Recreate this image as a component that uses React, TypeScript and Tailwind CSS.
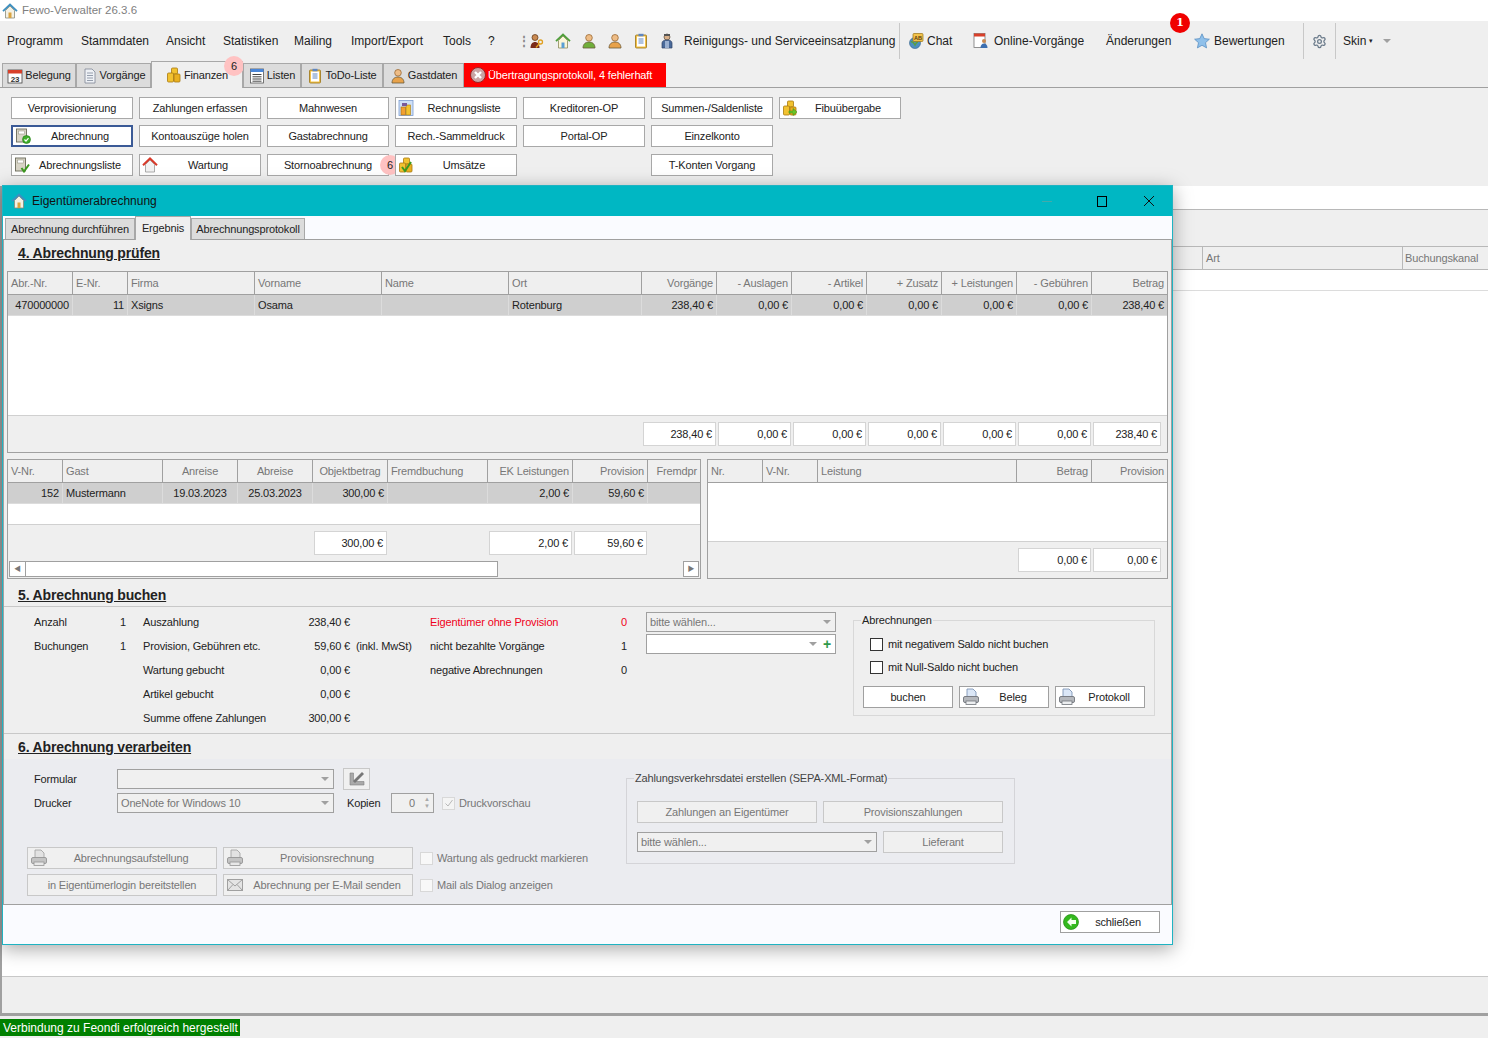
import type { ReactNode } from "react";
import { Settings } from "lucide-react";

type IconProps = { className?: string };

const Person = ({ body, className = "w-4 h-4" }: IconProps & { body: string }) => (
  <svg viewBox="0 0 16 16" className={className}>
    <circle cx="8" cy="4.8" r="3.3" fill="#eebc85" stroke="#9a6a35" strokeWidth="0.8" />
    <path d="M2 15c0-4 2.6-6 6-6s6 2 6 6z" fill={body} stroke="#6b5a3a" strokeWidth="0.8" />
  </svg>
);

const House = ({ className = "w-4 h-4" }: IconProps) => (
  <svg viewBox="0 0 16 16" className={className}>
    <path d="M3.5 7.5V15h9V7.5L8 3z" fill="#f4f1e4" stroke="#8a8a7a" strokeWidth="0.8" />
    <path d="M1 8.2 8 1.5l7 6.7" fill="none" stroke="#3d8fc0" strokeWidth="1.8" />
    <rect x="6.5" y="9.5" width="3" height="5.5" fill="#d9a441" />
  </svg>
);

const HouseGreen = () => (
  <svg viewBox="0 0 16 16" className="w-4 h-4">
    <path d="M3.5 7.5V15h9V7.5L8 3z" fill="#fbf6d8" stroke="#8a8a5a" strokeWidth="0.8" />
    <path d="M1 8.2 8 1.5l7 6.7" fill="none" stroke="#4f9e3a" strokeWidth="1.8" />
    <rect x="6.5" y="9.5" width="3" height="5.5" fill="#5a9fd4" />
  </svg>
);

const HouseRed = () => (
  <svg viewBox="0 0 16 16" className="w-4 h-4">
    <path d="M3.5 7.5V15h9V7.5L8 3z" fill="#f2f2f2" stroke="#999" strokeWidth="0.8" />
    <path d="M1 8.2 8 1.5l7 6.7" fill="none" stroke="#d83a2a" strokeWidth="2" />
  </svg>
);

const Coins = ({ check, arrow }: { check?: boolean; arrow?: boolean }) => (
  <svg viewBox="0 0 16 16" className="w-4 h-4">
    <rect x="5.5" y="1" width="6" height="6" rx="1" fill="#f2c230" stroke="#a87a10" strokeWidth="0.8" />
    <rect x="1.5" y="6" width="6" height="9" rx="1" fill="#f2c230" stroke="#a87a10" strokeWidth="0.8" />
    <rect x="8" y="7" width="6" height="8" rx="1" fill="#e9b020" stroke="#a87a10" strokeWidth="0.8" />
    {check && <path d="M4 10l3 4 6-9" fill="none" stroke="#3a9a20" strokeWidth="2" />}
    {arrow && <path d="M7 11h4V8.5l4 3.5-4 3.5V13H7z" fill="#6ac52a" stroke="#3a8a10" strokeWidth="0.5" />}
  </svg>
);

const CoinsDoc = () => (
  <svg viewBox="0 0 16 16" className="w-4 h-4">
    <rect x="1" y="0.5" width="14" height="15" fill="#cfe0f7" stroke="#7a9cd0" strokeWidth="0.8" />
    <rect x="3" y="7" width="4.5" height="8" fill="#f2a030" stroke="#a06a10" strokeWidth="0.6" />
    <rect x="8" y="5" width="4.5" height="10" fill="#f2c230" stroke="#a87a10" strokeWidth="0.6" />
    <rect x="4" y="3" width="5" height="3" fill="#7a5a9a" />
  </svg>
);

const ReportCheck = ({ round }: { round?: boolean }) => (
  <svg viewBox="0 0 16 16" className="w-4 h-4">
    <rect x="1.5" y="1" width="10" height="13" fill="#d8d4c6" stroke="#6a6a5a" strokeWidth="0.9" />
    <rect x="3.5" y="3" width="6" height="3" fill="#fff" stroke="#8a8a7a" strokeWidth="0.5" />
    {round && <circle cx="11.5" cy="11.5" r="4" fill="#3fae2a" stroke="#1f7a10" strokeWidth="0.6" />}
    <path d={round ? "M9.5 11.5l1.5 1.7 2.5-3" : "M7.5 11l2.5 3.5 5-7"} fill="none" stroke={round ? "#fff" : "#3c9a20"} strokeWidth={round ? 1.2 : 2} />
  </svg>
);

const PrinterIcon = () => (
  <svg viewBox="0 0 18 18" className="w-[18px] h-[18px]">
    <path d="M5 1h6l3 3v6H5z" fill="#dbe7f7" stroke="#7f95b5" strokeWidth="0.9" />
    <rect x="1.5" y="8.5" width="15" height="6" rx="1.5" fill="#b5b8bd" stroke="#70747a" strokeWidth="0.9" />
    <rect x="4" y="13" width="10" height="3.5" fill="#eceef0" stroke="#70747a" strokeWidth="0.8" />
  </svg>
);

const PrinterOff = () => (
  <svg viewBox="0 0 18 18" className="w-[18px] h-[18px]">
    <path d="M5 1h6l3 3v6H5z" fill="#e2e2e2" stroke="#a5a5a5" strokeWidth="0.9" />
    <rect x="1.5" y="8.5" width="15" height="6" rx="1.5" fill="#c4c4c4" stroke="#959595" strokeWidth="0.9" />
    <rect x="4" y="13" width="10" height="3.5" fill="#e8e8e8" stroke="#959595" strokeWidth="0.8" />
  </svg>
);

const MailOff = () => (
  <svg viewBox="0 0 18 18" className="w-[18px] h-[18px]">
    <rect x="1.5" y="3.5" width="15" height="11" fill="#e4e4e4" stroke="#a0a0a0" />
    <path d="M1.5 3.5 9 10l7.5-6.5M1.5 14.5 7 8.5M16.5 14.5 11 8.5" fill="none" stroke="#a0a0a0" />
  </svg>
);

const RulerOff = () => (
  <svg viewBox="0 0 18 18" className="w-[18px] h-[18px]">
    <path d="M2 3v12h14v-3.5H5.5V3z" fill="#a9a9a9" stroke="#808080" strokeWidth="0.6" />
    <path d="M5 11 14 2l2 2-9 9z" fill="#777" />
  </svg>
);

const BackIcon = () => (
  <svg viewBox="0 0 16 16" className="w-4 h-4">
    <circle cx="8" cy="8" r="7.5" fill="#34b81e" stroke="#1f8a10" strokeWidth="0.7" />
    <path d="M8.5 3.5 4 8l4.5 4.500V10H13V6H8.500z" fill="#f4fff0" />
  </svg>
);

const Caret = () => (
  <svg viewBox="0 0 8 4" className="w-2 h-1 shrink-0">
    <path d="M0 0h8L4 4z" fill="#a0a0a0" />
  </svg>
);

const Calendar = () => (
  <svg viewBox="0 0 16 16" className="w-4 h-4">
    <rect x="1" y="2" width="14" height="13" fill="#fff" stroke="#444" strokeWidth="0.8" />
    <rect x="1" y="2" width="14" height="3.5" fill="#d8402a" />
    <text x="8" y="13.5" textAnchor="middle" fontSize="8" fontWeight="700" fill="#333">23</text>
  </svg>
);

const DocIcon = () => (
  <svg viewBox="0 0 16 16" className="w-4 h-4">
    <path d="M3 1h7l3 3v11H3z" fill="#eef1f5" stroke="#7d8794" strokeWidth="0.8" />
    <path d="M5 5h6M5 7.5h6M5 10h6M5 12.5h6" stroke="#8a94a5" strokeWidth="0.9" />
  </svg>
);

const ListIcon = () => (
  <svg viewBox="0 0 16 16" className="w-4 h-4">
    <rect x="1.5" y="1" width="13" height="14" fill="#fff" stroke="#555" strokeWidth="0.8" />
    <rect x="1.5" y="1" width="13" height="3" fill="#4a86d8" />
    <path d="M3.5 6.5h9M3.5 8.8h9M3.5 11h9M3.5 13.2h9" stroke="#444" />
  </svg>
);

const Clipboard = () => (
  <svg viewBox="0 0 16 16" className="w-4 h-4">
    <rect x="2.5" y="2" width="11" height="13" rx="1" fill="#f2c24a" stroke="#9a7415" strokeWidth="0.8" />
    <rect x="4" y="3.5" width="8" height="10" fill="#fff" />
    <rect x="5.5" y="0.8" width="5" height="2.5" fill="#5f86c0" />
    <path d="M5.5 6h5M5.5 8h5M5.5 10h5" stroke="#5f86c0" />
  </svg>
);

const ErrorIcon = () => (
  <svg viewBox="0 0 16 16" className="w-4 h-4 shrink-0">
    <circle cx="8" cy="8" r="7.5" fill="#c9a3a3" stroke="#a02020" />
    <path d="M5 5l6 6M11 5l-6 6" stroke="#fff" strokeWidth="2.4" />
  </svg>
);

const Keys = () => (
  <svg viewBox="0 0 16 16" className="w-4 h-4">
    <circle cx="6" cy="4.5" r="3" fill="#c98a52" stroke="#5a2f10" strokeWidth="0.7" />
    <path d="M1.5 15c0-4 2-6 4.5-6s4.500 2 4.500 6z" fill="#7a2a1a" />
    <circle cx="11.5" cy="9" r="2" fill="none" stroke="#e0a020" strokeWidth="1.3" />
    <path d="M10.5 10.5 7 14.5" stroke="#e0a020" strokeWidth="1.3" />
  </svg>
);

const Cleaner = () => (
  <svg viewBox="0 0 16 16" className="w-4 h-4">
    <circle cx="8" cy="4" r="3" fill="#d8b08a" stroke="#5a4a3a" strokeWidth="0.7" />
    <rect x="5" y="1" width="6" height="2" fill="#555" />
    <path d="M3 15V10c0-2 2-3 5-3s5 1 5 3v5z" fill="#4a6a9a" stroke="#2f4468" strokeWidth="0.7" />
    <rect x="6" y="8" width="4" height="7" fill="#9ab0d0" />
  </svg>
);

const ChatIcon = () => (
  <svg viewBox="0 0 16 16" className="w-4 h-4">
    <circle cx="7" cy="10" r="5.5" fill="#4f8fc0" stroke="#2f5f8a" strokeWidth="0.6" />
    <path d="M3 9c2-1 3 1 4 3 1-2 2-3 3-3" stroke="#5aa040" strokeWidth="1.5" fill="none" />
    <rect x="5" y="0.5" width="10" height="8" rx="1" fill="#f2c24a" stroke="#9a7415" strokeWidth="0.7" />
    <text x="10" y="7" textAnchor="middle" fontSize="5.5" fontWeight="700" fill="#5a3a10">AB</text>
  </svg>
);

const OnlineIcon = () => (
  <svg viewBox="0 0 16 16" className="w-4 h-4">
    <rect x="1" y="0.5" width="11" height="14" fill="#fff" stroke="#777" strokeWidth="0.8" />
    <rect x="1" y="0.5" width="11" height="3" fill="#d8402a" />
    <circle cx="11" cy="8" r="2" fill="#c98a52" />
    <path d="M7.5 15c0-3 1.5-4.500 3.500-4.500s3.500 1.500 3.500 4.500z" fill="#3d6fb0" />
  </svg>
);

const StarIcon = () => (
  <svg viewBox="0 0 16 16" className="w-4 h-4">
    <path d="M8 .8l2.200 4.800 5.200.6-3.900 3.500 1.100 5.200L8 12.300l-4.600 2.600 1.100-5.200L.6 6.200l5.200-.6z" fill="#8fc0ea" stroke="#4f86bd" strokeWidth="0.7" />
  </svg>
);

const modules: { label: string; icon?: ReactNode; active?: boolean; badge?: boolean }[] = [
  { label: "Verprovisionierung" },
  { label: "Zahlungen erfassen" },
  { label: "Mahnwesen" },
  { label: "Rechnungsliste", icon: <CoinsDoc /> },
  { label: "Kreditoren-OP" },
  { label: "Summen-/Saldenliste" },
  { label: "Fibuübergabe", icon: <Coins arrow /> },
  { label: "Abrechnung", icon: <ReportCheck round />, active: true },
  { label: "Kontoauszüge holen" },
  { label: "Gastabrechnung" },
  { label: "Rech.-Sammeldruck" },
  { label: "Portal-OP" },
  { label: "Einzelkonto" },
  { label: "" },
  { label: "Abrechnungsliste", icon: <ReportCheck /> },
  { label: "Wartung", icon: <HouseRed /> },
  { label: "Stornoabrechnung", badge: true },
  { label: "Umsätze", icon: <Coins check /> },
  { label: "" },
  { label: "T-Konten Vorgang" },
];

const mainTabs: { label: string; w: string; icon: ReactNode; active?: boolean }[] = [
  { label: "Belegung", w: "w-[74px]", icon: <Calendar /> },
  { label: "Vorgänge", w: "w-[75px]", icon: <DocIcon /> },
  { label: "Finanzen", w: "w-[92px]", icon: <Coins />, active: true },
  { label: "Listen", w: "w-[58px]", icon: <ListIcon /> },
  { label: "ToDo-Liste", w: "w-[82px]", icon: <Clipboard /> },
  { label: "Gastdaten", w: "w-[81px]", icon: <Person body="#e8a24a" /> },
];

const menu = [
  { label: "Programm", w: "w-[74px]" },
  { label: "Stammdaten", w: "w-[85px]" },
  { label: "Ansicht", w: "w-[57px]" },
  { label: "Statistiken", w: "w-[71px]" },
  { label: "Mailing", w: "w-[57px]" },
  { label: "Import/Export", w: "w-[92px]" },
  { label: "Tools", w: "w-[45px]" },
  { label: "?", w: "w-[30px]" },
];

const topCols = "grid grid-cols-[65px_55px_127px_127px_127px_133px_75px_75px_75px_75px_75px_75px_75px]";
const topHead: [string, boolean][] = [
  ["Abr.-Nr.", false], ["E-Nr.", false], ["Firma", false], ["Vorname", false], ["Name", false], ["Ort", false],
  ["Vorgänge", true], ["- Auslagen", true], ["- Artikel", true], ["+ Zusatz", true], ["+ Leistungen", true], ["- Gebühren", true], ["Betrag", true],
];
const topRow: [string, boolean][] = [
  ["470000000", true], ["11", true], ["Xsigns", false], ["Osama", false], ["", false], ["Rotenburg", false],
  ["238,40 €", true], ["0,00 €", true], ["0,00 €", true], ["0,00 €", true], ["0,00 €", true], ["0,00 €", true], ["238,40 €", true],
];

const leftCols = "grid grid-cols-[55px_100px_75px_75px_75px_100px_85px_75px_52px]";
const leftHead: [string, string][] = [
  ["V-Nr.", "text-left"], ["Gast", "text-left"], ["Anreise", "text-center"], ["Abreise", "text-center"], ["Objektbetrag", "text-center"],
  ["Fremdbuchung", "text-left"], ["EK Leistungen", "text-right"], ["Provision", "text-right"], ["Fremdpr", "text-right"],
];
const leftRow: [string, string][] = [
  ["152", "text-right"], ["Mustermann", "text-left"], ["19.03.2023", "text-center"], ["25.03.2023", "text-center"], ["300,00 €", "text-right"],
  ["", "text-left"], ["2,00 €", "text-right"], ["59,60 €", "text-right"], ["", "text-left"],
];

const rightCols = "grid grid-cols-[55px_55px_199px_75px_75px]";
const rightHead: [string, boolean][] = [["Nr.", false], ["V-Nr.", false], ["Leistung", false], ["Betrag", true], ["Provision", true]];

const HeadCell = ({ children, align }: { children: ReactNode; align: string }) => (
  <div className={`h-[22px] leading-[22px] px-[3px] border-r border-[#a0a0a0] last:border-r-0 text-[#777] overflow-hidden whitespace-nowrap ${align}`}>
    {children}
  </div>
);

const DataCell = ({ children, align }: { children: ReactNode; align: string }) => (
  <div className={`h-[20px] leading-[20px] px-[3px] border-r border-[#dcdcdc] last:border-r-0 text-[#222] overflow-hidden whitespace-nowrap ${align}`}>
    {children}
  </div>
);

const SumBox = ({ value, w = "w-[73px]" }: { value: string; w?: string }) => (
  <div className={`${w} h-[24px] leading-[22px] bg-white border border-[#d4d4d4] text-right pr-[3px] text-[#222]`}>{value}</div>
);

const Heading = ({ children, h }: { children: ReactNode; h: string }) => (
  <div className={`${h} pl-[14px] flex`}>
    <span className="text-[14px] leading-[18px] font-bold underline text-[#222]">{children}</span>
  </div>
);

const Combo = ({ text, w, plus, enabled }: { text?: string; w: string; plus?: boolean; enabled?: boolean }) => (
  <div className={`${w} h-[20px] shrink-0 border border-[#a0a0a0] flex items-center pl-[3px] pr-[4px] ${enabled ? "bg-white" : "bg-[#f0f0f0]"}`}>
    <span className="flex-1 text-[#777] whitespace-nowrap">{text}</span>
    <Caret />
    {plus && <span className="ml-[6px] text-[#2f9a4a] font-bold text-[14px] leading-none">+</span>}
  </div>
);

const Btn = ({ children, icon, w, off }: { children: ReactNode; icon?: ReactNode; w: string; off?: boolean }) => (
  <div className={`${w} h-[22px] shrink-0 border flex items-center pl-[2px] pr-[2px] ${off ? "bg-[#f0f0f0] border-[#c8c8c8] text-[#777]" : "bg-white border-[#a0a0a0] text-[#222]"}`}>
    {icon}
    <span className="flex-1 text-center whitespace-nowrap">{children}</span>
  </div>
);

const summary = [
  ["Anzahl", "1", "Auszahlung", "238,40 €", "", "Eigentümer ohne Provision", "0"],
  ["Buchungen", "1", "Provision, Gebühren etc.", "59,60 €", "(inkl. MwSt)", "nicht bezahlte Vorgänge", "1"],
  ["", "", "Wartung gebucht", "0,00 €", "", "negative Abrechnungen", "0"],
  ["", "", "Artikel gebucht", "0,00 €", "", "", ""],
  ["", "", "Summe offene Zahlungen", "300,00 €", "", "", ""],
];

export default function App() {
  return (
    <div className="relative w-[1488px] h-[1038px] overflow-hidden bg-[#efefef] text-[11px] tracking-[-0.15px] text-[#222] font-['Liberation_Sans','Noto_Sans_CJK_SC',sans-serif]">
      {/* app title */}
      <div className="h-[21px] bg-white flex items-center pl-[2px] gap-[4px] text-[11.5px] tracking-normal text-[#808080]">
        <House />
        <span>Fewo-Verwalter 26.3.6</span>
      </div>

      {/* menu bar */}
      <div className="h-[40px] pl-[7px] flex items-center text-[12px] tracking-normal">
        {menu.map((m) => (
          <span key={m.label} className={m.w}>{m.label}</span>
        ))}
        <span className="w-[6px] text-[#888] font-bold">⋮</span>
        <div className="flex">
          <span className="w-[26px] flex justify-center"><Keys /></span>
          <span className="w-[26px] flex justify-center"><HouseGreen /></span>
          <span className="w-[26px] flex justify-center"><Person body="#6fae3a" /></span>
          <span className="w-[26px] flex justify-center"><Person body="#e8a24a" /></span>
          <span className="w-[26px] flex justify-center"><Clipboard /></span>
          <span className="w-[26px] flex justify-center"><Cleaner /></span>
        </div>
        <span className="ml-[4px] w-[215px] whitespace-nowrap">Reinigungs- und Serviceeinsatzplanung</span>
        <span className="h-[36px] border-l border-[#c8c8c8]" />
        <span className="ml-[8px] w-[19px]"><ChatIcon /></span>
        <span className="w-[46px]">Chat</span>
        <span className="w-[21px]"><OnlineIcon /></span>
        <span className="w-[112px]">Online-Vorgänge</span>
        <span className="relative w-[88px]">
          Änderungen
          <span className="absolute left-[64px] top-[-19px] w-[20px] h-[20px] rounded-full bg-[#f00000] text-white text-center font-bold text-[11px] leading-[20px] font-['DejaVu_Serif',serif]">1</span>
        </span>
        <span className="w-[20px]"><StarIcon /></span>
        <span className="w-[89px]">Bewertungen</span>
        <span className="h-[36px] border-l border-[#c8c8c8]" />
        <span className="w-[31px] flex justify-center text-[#6a7a8a]"><Settings size={15} /></span>
        <span className="h-[36px] border-l border-[#c8c8c8]" />
        <span className="ml-[7px] w-[26px]">Skin</span>
        <span className="text-[7px] w-[14px]">▾</span>
        <Caret />
      </div>

      {/* main tabs */}
      <div className="h-[27px] pl-[2px] flex items-end border-b border-[#a0a0a0]">
        {mainTabs.map((t) => (
          <div
            key={t.label}
            className={`${t.w} relative flex items-center justify-center gap-[2px] border border-b-0 border-[#a8a8a8] whitespace-nowrap ${
              t.active ? "h-[27px] bg-[#efefef] border-b-0 -mb-px" : "h-[24px] bg-[#dcdcdc]"
            }`}
          >
            {t.icon}
            <span>{t.label}</span>
            {t.active && (
              <span className="absolute left-[72px] top-[-6px] w-[20px] h-[20px] rounded-full bg-[#ffc2c2] text-center leading-[20px] text-[#222]">6</span>
            )}
          </div>
        ))}
        <div className="w-[202px] h-[24px] bg-[#ff0000] text-white flex items-center gap-[2px] pl-[6px] whitespace-nowrap">
          <ErrorIcon />
          <span className="pt-px">Übertragungsprotokoll, 4 fehlerhaft</span>
        </div>
      </div>

      {/* module buttons */}
      <div className="h-[98px] pl-[11px] pt-[9px]">
        <div className="grid grid-cols-[122px_122px_122px_122px_122px_122px_122px] gap-x-[6px] gap-y-[6px] w-fit">
          {modules.map((m, i) =>
            m.label === "" ? (
              <div key={i} />
            ) : (
              <div
                key={i}
                className={`relative h-[22px] bg-white flex items-center px-[2px] whitespace-nowrap ${
                  m.active ? "border-2 border-[#3b5a96]" : "border border-[#a8a8a8]"
                } ${i >= 14 ? "mt-[1px]" : ""}`}
              >
                {m.icon}
                <span className="flex-1 text-center pt-px">{m.label}</span>
                {m.badge && (
                  <span className="absolute left-[112px] top-[0px] w-[20px] h-[20px] rounded-full bg-[#ffc2c2] text-center leading-[20px]">6</span>
                )}
              </div>
            ),
          )}
        </div>
      </div>

      {/* list behind the dialog */}
      <div className="border-l-2 border-[#a0a0a0] h-[827px] flex flex-col">
        <div className="h-[24px] bg-white border-b border-[#b8b8b8]" />
        <div className="h-[36px]" />
        <div className="h-[24px] flex justify-end border-y border-[#b8b8b8] text-[#777] bg-[#efefef]">
          <div className="w-[200px] pl-[3px] border-l border-[#b8b8b8] leading-[22px]">Art</div>
          <div className="w-[86px] pl-[2px] border-l border-[#b8b8b8] leading-[22px] whitespace-nowrap">Buchungskanal</div>
        </div>
        <div className="h-[21px] bg-white border-b border-[#dcdcdc]" />
        <div className="flex-1 bg-white border-b border-[#c8c8c8]" />
        <div className="h-[36px]" />
      </div>
      <div className="h-[3px] bg-[#a0a0a0]" />

      {/* status bar */}
      <div className="pt-[3px]">
        <div className="w-[240px] h-[17px] bg-[#008000] text-white text-[12px] tracking-normal leading-[18px] pl-[3px] whitespace-nowrap">
          Verbindung zu Feondi erfolgreich hergestellt
        </div>
      </div>

      {/* dialog window */}
      <div className="absolute left-[2px] top-[185px] w-[1171px] h-[760px] flex flex-col border border-[#1fb3c2] bg-[#fafbff] shadow-[0_4px_18px_rgba(0,0,0,0.35)]">
        <div className="h-[30px] shrink-0 bg-[#00b7c3] flex items-center pl-[8px] gap-[5px] text-[12px] tracking-normal text-[#111]">
          <House />
          <span className="flex-1">Eigentümerabrechnung</span>
          <span className="w-[46px] flex justify-center"><span className="w-[10px] border-t border-[#4aa] mt-px" /></span>
          <span className="w-[46px] flex justify-center pl-[8px]"><span className="w-[10px] h-[11px] border border-black" /></span>
          <span className="w-[46px] flex justify-center">
            <svg viewBox="0 0 12 12" className="w-3 h-3"><path d="M1 1l10 10M11 1 1 11" stroke="#111" /></svg>
          </span>
        </div>

        <div className="h-[24px] shrink-0 flex items-end pl-[2px] border-b border-[#a0a0a0]">
          <div className="w-[130px] h-[21px] bg-[#dcdcdc] border border-b-0 border-[#a8a8a8] text-center leading-[20px] whitespace-nowrap">Abrechnung durchführen</div>
          <div className="w-[56px] h-[24px] bg-[#efefef] border border-b-0 border-[#a8a8a8] text-center leading-[22px] -mb-px">Ergebnis</div>
          <div className="w-[114px] h-[21px] bg-[#dcdcdc] border border-b-0 border-[#a8a8a8] text-center leading-[20px] whitespace-nowrap">Abrechnungsprotokoll</div>
        </div>

        <div className="h-[664px] shrink-0 flex flex-col bg-[#efefef] border-x border-[#a0a0a0]">
          <Heading h="h-[31px] pt-[4px]">4. Abrechnung prüfen</Heading>

          {/* owner table */}
          <div className="ml-[3px] w-[1161px] h-[182px] flex flex-col border border-[#a0a0a0]">
            <div className={`${topCols} border-b border-[#a0a0a0]`}>
              {topHead.map(([t, r]) => (
                <HeadCell key={t} align={r ? "text-right" : "text-left"}>{t}</HeadCell>
              ))}
            </div>
            <div className={`${topCols} bg-[#cfcfcf] border-b border-[#dcdcdc]`}>
              {topRow.map(([t, r], i) => (
                <DataCell key={i} align={r ? "text-right" : "text-left"}>{t}</DataCell>
              ))}
            </div>
            <div className="flex-1 bg-white border-b border-[#d0d0d0]" />
            <div className="h-[36px] pt-[6px] pr-[6px] flex justify-end gap-[2px]">
              <SumBox value="238,40 €" />
              <SumBox value="0,00 €" />
              <SumBox value="0,00 €" />
              <SumBox value="0,00 €" />
              <SumBox value="0,00 €" />
              <SumBox value="0,00 €" />
              <SumBox value="238,40 €" w="w-[68px]" />
            </div>
          </div>

          <div className="mt-[6px] ml-[3px] h-[120px] flex gap-[6px]">
            {/* bookings */}
            <div className="w-[694px] flex flex-col border border-[#a0a0a0]">
              <div className={`${leftCols} border-b border-[#a0a0a0] overflow-hidden`}>
                {leftHead.map(([t, a]) => (
                  <HeadCell key={t} align={a}>{t}</HeadCell>
                ))}
              </div>
              <div className={`${leftCols} bg-[#cfcfcf] border-b border-[#dcdcdc]`}>
                {leftRow.map(([t, a], i) => (
                  <DataCell key={i} align={a}>{t}</DataCell>
                ))}
              </div>
              <div className="h-[21px] bg-white border-b border-[#d0d0d0]" />
              <div className="flex-1 pt-[6px] pl-[306px] flex">
                <SumBox value="300,00 €" w="w-[73px]" />
                <SumBox value="2,00 €" w="w-[83px] ml-[102px]" />
                <SumBox value="59,60 €" w="w-[73px] ml-[2px]" />
              </div>
              <div className="h-[16px] mb-[1px] pl-[1px] pr-[1px] flex justify-between">
                <div className="w-[489px] flex bg-white border border-[#a0a0a0]">
                  <span className="w-[16px] border-r border-[#a0a0a0] flex items-center justify-center text-[#777] text-[7px]">◀</span>
                </div>
                <span className="w-[16px] bg-white border border-[#a0a0a0] flex items-center justify-center text-[#777] text-[7px]">▶</span>
              </div>
            </div>

            {/* services */}
            <div className="w-[461px] flex flex-col border border-[#a0a0a0]">
              <div className={`${rightCols} border-b border-[#a0a0a0]`}>
                {rightHead.map(([t, r]) => (
                  <HeadCell key={t} align={r ? "text-right" : "text-left"}>{t}</HeadCell>
                ))}
              </div>
              <div className="h-[59px] bg-white border-b border-[#d0d0d0]" />
              <div className="flex-1 pt-[6px] pr-[6px] flex justify-end gap-[2px]">
                <SumBox value="0,00 €" />
                <SumBox value="0,00 €" w="w-[68px]" />
              </div>
            </div>
          </div>

          <Heading h="h-[28px] pt-[7px] border-b border-[#c8c8c8]">5. Abrechnung buchen</Heading>

          <div className="h-[127px] shrink-0 border-b border-[#c8c8c8] flex pl-[30px]">
            <div className="pt-[3px] grid grid-cols-[86px_23px_130px_77px_80px_191px_25px_190px] auto-rows-[24px] items-center w-fit">
              {summary.map((r, i) => (
                <div key={i} className="contents">
                  <span>{r[0]}</span>
                  <span>{r[1]}</span>
                  <span className="whitespace-nowrap">{r[2]}</span>
                  <span className="text-right whitespace-nowrap">{r[3]}</span>
                  <span className="pl-[6px] whitespace-nowrap">{r[4]}</span>
                  <span className={`whitespace-nowrap ${i === 0 ? "text-[#f00020]" : ""}`}>{r[5]}</span>
                  <span className={i === 0 ? "text-[#f00020]" : ""}>{r[6]}</span>
                  <div className="h-[20px]">
                    {i === 0 && <Combo text="bitte wählen..." w="w-[190px]" />}
                    {i === 1 && <div className="-mt-[2px]"><Combo w="w-[190px]" plus enabled /></div>}
                  </div>
                </div>
              ))}
            </div>
            <fieldset className="ml-[17px] mt-[5px] w-[302px] h-[104px] border border-[#d8d8d8]">
              <legend className="ml-[7px] px-px leading-[16px]">Abrechnungen</legend>
              <div className="pl-[9px]">
                <label className="mt-[9px] ml-[7px] flex items-center h-[14px] gap-[5px]">
                  <span className="w-[13px] h-[13px] bg-white border border-[#333]" />
                  mit negativem Saldo nicht buchen
                </label>
                <label className="mt-[9px] ml-[7px] flex items-center h-[14px] gap-[5px]">
                  <span className="w-[13px] h-[13px] bg-white border border-[#333]" />
                  mit Null-Saldo nicht buchen
                </label>
                <div className="mt-[12px] flex gap-[6px]">
                  <Btn w="w-[90px]">buchen</Btn>
                  <Btn w="w-[90px]" icon={<PrinterIcon />}>Beleg</Btn>
                  <Btn w="w-[90px]" icon={<PrinterIcon />}>Protokoll</Btn>
                </div>
              </div>
            </fieldset>
          </div>

          <Heading h="h-[25px] pt-[4px]">6. Abrechnung verarbeiten</Heading>

          <div className="flex-1 bg-[#ebecf0] flex">
            <div className="w-[622px] shrink-0 pl-[30px] pt-[9px]">
              <div className="flex items-center h-[22px]">
                <span className="w-[83px]">Formular</span>
                <Combo w="w-[217px]" />
                <span className="ml-[9px] w-[27px] h-[22px] bg-[#f0f0f0] border border-[#c8c8c8] flex items-center justify-center">
                  <RulerOff />
                </span>
              </div>
              <div className="mt-[3px] flex items-center h-[20px]">
                <span className="w-[83px]">Drucker</span>
                <Combo w="w-[217px]" text="OneNote for Windows 10" />
                <span className="ml-[13px] w-[44px]">Kopien</span>
                <div className="w-[43px] h-[20px] border border-[#a0a0a0] bg-[#f0f0f0] flex items-center text-[#777]">
                  <span className="flex-1 text-right pr-[6px]">0</span>
                  <span className="w-[12px] text-[6px] leading-[7px] text-[#aaa] text-center">▲<br />▼</span>
                </div>
                <span className="ml-[8px] w-[13px] h-[13px] bg-[#f4f4f4] border border-[#d8d8d8] flex items-center justify-center">
                  <svg viewBox="0 0 10 10" className="w-[10px] h-[10px]"><path d="M1.5 5.5 4 8l4.5-6" fill="none" stroke="#b8b8b8" /></svg>
                </span>
                <span className="ml-[4px] text-[#777]">Druckvorschau</span>
              </div>
              <div className="mt-[34px] -ml-[7px] flex items-center gap-[6px]">
                <Btn off w="w-[190px]" icon={<PrinterOff />}>Abrechnungsaufstellung</Btn>
                <Btn off w="w-[190px]" icon={<PrinterOff />}>Provisionsrechnung</Btn>
                <span className="ml-px w-[13px] h-[13px] bg-[#f8f8f8] border border-[#d8d8d8]" />
                <span className="-ml-[2px] text-[#777] whitespace-nowrap">Wartung als gedruckt markieren</span>
              </div>
              <div className="mt-[5px] -ml-[7px] flex items-center gap-[6px]">
                <Btn off w="w-[190px]">in Eigentümerlogin bereitstellen</Btn>
                <Btn off w="w-[190px]" icon={<MailOff />}>Abrechnung per E-Mail senden</Btn>
                <span className="ml-px w-[13px] h-[13px] bg-[#f8f8f8] border border-[#d8d8d8]" />
                <span className="-ml-[2px] text-[#777] whitespace-nowrap">Mail als Dialog anzeigen</span>
              </div>
            </div>

            <fieldset className="mt-[11px] w-[389px] h-[94px] border border-[#d4d4d8]">
              <legend className="ml-[7px] px-px leading-[16px] text-[#444] whitespace-nowrap">Zahlungsverkehrsdatei erstellen (SEPA-XML-Format)</legend>
              <div className="pl-[10px]">
                <div className="mt-[15px] flex gap-[6px]">
                  <Btn off w="w-[180px]">Zahlungen an Eigentümer</Btn>
                  <Btn off w="w-[180px]">Provisionszahlungen</Btn>
                </div>
                <div className="mt-[8px] flex items-center gap-[6px]">
                  <Combo w="w-[240px]" text="bitte wählen..." />
                  <Btn off w="w-[120px]">Lieferant</Btn>
                </div>
              </div>
            </fieldset>
          </div>
        </div>

        <div className="flex-1 border-t border-[#a0a0a0] pt-[6px] pr-[12px] flex justify-end items-start">
          <Btn w="w-[100px]" icon={<BackIcon />}>schließen</Btn>
        </div>
      </div>
    </div>
  );
}
